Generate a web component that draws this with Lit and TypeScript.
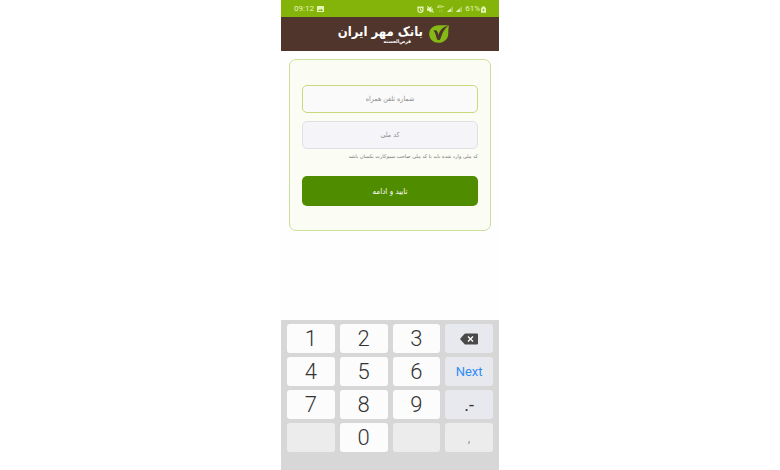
import { LitElement, html, css, svg } from 'lit';
import { customElement, property } from 'lit/decorators.js';
import { classMap } from 'lit/directives/class-map.js';

@customElement('status-bar')
class StatusBar extends LitElement {
    static styles = css`
        :host {
            display: flex;
            align-items: center;
            justify-content: space-between;
            height: 17px;
            box-sizing: border-box;
            padding: 1px 13px 0 13px;
            background: #84b40a;
            color: #e6f5ba;
            font: 8px/16px Roboto, sans-serif;
        }
        .group {
            display: flex;
            align-items: center;
            gap: 3px;
        }
        svg {
            display: block;
            fill: currentColor;
        }
        .network {
            display: flex;
            flex-direction: column;
            align-items: center;
            font-size: 4px;
            line-height: 4px;
        }
        .charge {
            display: flex;
            align-items: center;
            gap: 1px;
        }
    `;

    render() {
        const signal = html`
            <svg width="6" height="6" viewBox="0 0 6 6">
                <path d="M0 6L6 0V6Z" opacity="0.4" />
                <path d="M0 6L3.6 2.4V6Z" />
            </svg>
        `;
        return html`
            <div class="group">
                <span>09:12</span>
                <svg width="7" height="6" viewBox="0 0 7 6">
                    <path fill-rule="evenodd" d="M.6 0H6.4Q7 0 7 .6V5.4Q7 6 6.4 6H.6Q0 6 0 5.4V.6Q0 0 .6 0ZM1 5H6L4.4 2.6L3.1 4.2L2.2 3.2Z" />
                </svg>
            </div>
            <div class="group">
                <svg width="7" height="7" viewBox="0 0 7 7">
                    <path d="M0 1.3L1.4 0L2 .7L.6 2ZM7 1.3L5.6 0L5 .7L6.4 2Z" />
                    <path fill-rule="evenodd" d="M3.5 .6A3.1 3.1 0 1 1 3.5 6.9A3.1 3.1 0 1 1 3.5 .6ZM3.5 1.8A2 2 0 1 0 3.5 5.9A2 2 0 1 0 3.5 1.8Z" />
                    <path d="M3 2.2H4V3.6L5 4.4L4.5 5.2L3 4.2Z" />
                </svg>
                <svg width="7" height="7" viewBox="0 0 7 7">
                    <path d="M0 2.2H1.6L4.4 .2V6.8L1.6 4.8H0Z" />
                    <path d="M.3 .2L6.6 6.4" stroke="currentColor" stroke-width="1.1" />
                    <path d="M5 2.1L6.2 3.3L5 4.4Z" />
                </svg>
                <span class="network"><span>4G+</span><span>↓↑</span></span>
                ${signal}${signal}
                <span class="charge">
                    <span>61%</span>
                    <svg width="5" height="7" viewBox="0 0 5 7">
                        <path fill-rule="evenodd" d="M1.5 .3H3.5V1.1Q5 1.4 5 3V6.2Q5 6.7 4.5 6.7H.5Q0 6.7 0 6.2V3Q0 1.4 1.5 1.1ZM2.7 2.3L1.2 4.4H2.3V5.7L3.8 3.6H2.7Z" />
                    </svg>
                </span>
            </div>
        `;
    }
}

@customElement('bank-header')
class BankHeader extends LitElement {
    static styles = css`
        :host {
            display: flex;
            align-items: center;
            justify-content: flex-end;
            direction: ltr;
            gap: 6px;
            height: 34px;
            box-sizing: border-box;
            padding-right: 50px;
            background: #4f352b;
            color: #fff;
            font-family: 'DejaVu Sans Condensed', 'DejaVu Sans', sans-serif;
        }
        .name {
            display: flex;
            flex-direction: column;
            align-items: flex-start;
            direction: rtl;
        }
        h1 {
            margin: 0;
            font-size: 13px;
            line-height: 15px;
            font-weight: bold;
            white-space: nowrap;
        }
        .tagline {
            padding-right: 12px;
            font-size: 5px;
            line-height: 5px;
            font-weight: bold;
        }
        svg {
            display: block;
            flex: none;
        }
    `;

    render() {
        return html`
            <div class="name">
                <h1>بانک مهر ایران</h1>
                <span class="tagline">قرض‌الحسنه</span>
            </div>
            <svg width="20" height="18" viewBox="0 0 20 18">
                <path fill="#85b916" d="M10.5 .3C4.8 -.2 .2 3.8 .2 9C.2 14 4.2 17.8 9.4 17.8C15 17.8 19.2 14 19.3 8.7C19.3 6 19.3 3.5 20 .7C17.5 .2 14.8 .1 10.5 .3Z" />
                <path fill="#4f352b" d="M4.6 5.8C7.4 4.4 8.8 6.4 9.4 9.9C10.6 5.8 13.4 2 19.4 .5C14.8 4.3 13.2 8.6 11.4 14C10 15.8 8.4 15.4 7.8 13.8C6.9 11.3 6.6 7.9 4.6 5.8Z" />
            </svg>
        `;
    }
}

@customElement('login-form')
class LoginForm extends LitElement {
    static styles = css`
        :host {
            display: block;
            direction: rtl;
            font-family: 'DejaVu Sans Condensed', 'DejaVu Sans', sans-serif;
        }
        form {
            display: flex;
            flex-direction: column;
            margin: 8px;
            padding: 25px 12px 24px;
            border: 1px solid #cbdf9a;
            border-radius: 7px;
            background: #fbfdf4;
        }
        input,
        button {
            width: 100%;
            box-sizing: border-box;
            border-radius: 5px;
            font-family: inherit;
            text-align: center;
        }
        input {
            height: 28px;
            margin-bottom: 8px;
            padding: 0 8px;
            border: 1px solid #dfe0e4;
            background: #f5f5f9;
            color: #444;
            font-size: 7px;
            outline: none;
        }
        .phone {
            border-color: #c6da7c;
            background: #fafafa;
        }
        .national {
            margin-bottom: 2px;
        }
        input::placeholder {
            color: #8c8c8c;
            opacity: 1;
        }
        .hint {
            margin: 0 0 15px;
            color: #777;
            font-family: 'DejaVu Sans', sans-serif;
            font-size: 5px;
            line-height: 10px;
            white-space: nowrap;
        }
        button {
            height: 30px;
            padding: 0;
            border: none;
            background: #508c00;
            color: #fff;
            font-size: 8px;
        }
    `;

    render() {
        return html`
            <form @submit=${(e: Event) => e.preventDefault()}>
                <input class="phone" type="tel" placeholder="شماره تلفن همراه" aria-label="شماره تلفن همراه" dir="rtl" />
                <input class="national" type="text" inputmode="numeric" placeholder="کد ملی" aria-label="کد ملی" aria-describedby="hint" />
                <p id="hint" class="hint">کد ملی وارد شده باید با کد ملی صاحب سیم‌کارت یکسان باشد</p>
                <button type="submit">تایید و ادامه</button>
            </form>
        `;
    }
}

interface Key {
    text: string;
    kind: string;
    label?: string;
}

const digit = (text: string): Key => ({ text, kind: 'digit' });

const KEYS: Key[] = [
    digit('1'), digit('2'), digit('3'), { text: '', kind: 'erase', label: 'Backspace' },
    digit('4'), digit('5'), digit('6'), { text: 'Next', kind: 'next' },
    digit('7'), digit('8'), digit('9'), { text: '.-', kind: 'symbol' },
    { text: '', kind: 'blank' }, digit('0'), { text: '', kind: 'blank' }, { text: ',', kind: 'comma' },
];

@customElement('number-pad')
class NumberPad extends LitElement {
    static styles = css`
        :host {
            display: grid;
            grid-template-columns: repeat(4, 1fr);
            grid-auto-rows: 29px;
            gap: 4px 5px;
            padding: 4px 6px 18px;
            background: #d7d7d7;
        }
        button {
            display: flex;
            align-items: center;
            justify-content: center;
            padding: 0;
            border: none;
            border-radius: 3px;
            background: #fcfcfc;
            color: #333;
            font: 300 22px/29px Roboto, sans-serif;
        }
        .erase,
        .next,
        .symbol {
            background: #e8e9ef;
        }
        .next {
            color: #2e8df5;
            font-size: 13px;
            font-weight: 400;
        }
        .symbol {
            font-size: 18px;
            font-weight: 400;
        }
        .blank,
        .comma {
            background: #ececec;
        }
        .comma {
            color: #999;
            font-size: 13px;
            font-weight: 400;
        }
    `;

    @property({ attribute: false }) keys: Key[] = KEYS;

    renderKey(key: Key) {
        return html`
            <button
                type="button"
                class=${classMap({ [key.kind]: true })}
                aria-label=${key.label ?? key.text}
                ?disabled=${key.kind === 'blank'}
            >${key.kind === 'erase' ? this.renderErase() : key.text}</button>
        `;
    }

    renderErase() {
        return html`
            <svg width="18" height="12" viewBox="0 0 18 12">
                ${svg`
                    <path fill="#4a4a4a" d="M5.5 .5H17Q18 .5 18 1.5V10.5Q18 11.5 17 11.5H5.5Q4.8 11.5 4.4 11L.4 6.6Q0 6 .4 5.4L4.4 1Q4.8 .5 5.5 .5Z" />
                    <path stroke="#fff" stroke-width="1.4" d="M8 3.5L13 8.5M13 3.5L8 8.5" />
                `}
            </svg>
        `;
    }

    render() {
        return this.keys.map((key) => this.renderKey(key));
    }
}

@customElement('app-root')
class AppRoot extends LitElement {
    static styles = css`
        :host {
            display: flex;
            justify-content: center;
            min-height: 100vh;
            background: #fff;
        }
        .screen {
            display: flex;
            flex-direction: column;
            width: 100%;
            max-width: 218px;
            background: #fefefe;
        }
        main {
            flex: 1;
        }
    `;

    render() {
        return html`
            <div class="screen">
                <status-bar></status-bar>
                <bank-header></bank-header>
                <main><login-form></login-form></main>
                <number-pad></number-pad>
            </div>
        `;
    }
}
